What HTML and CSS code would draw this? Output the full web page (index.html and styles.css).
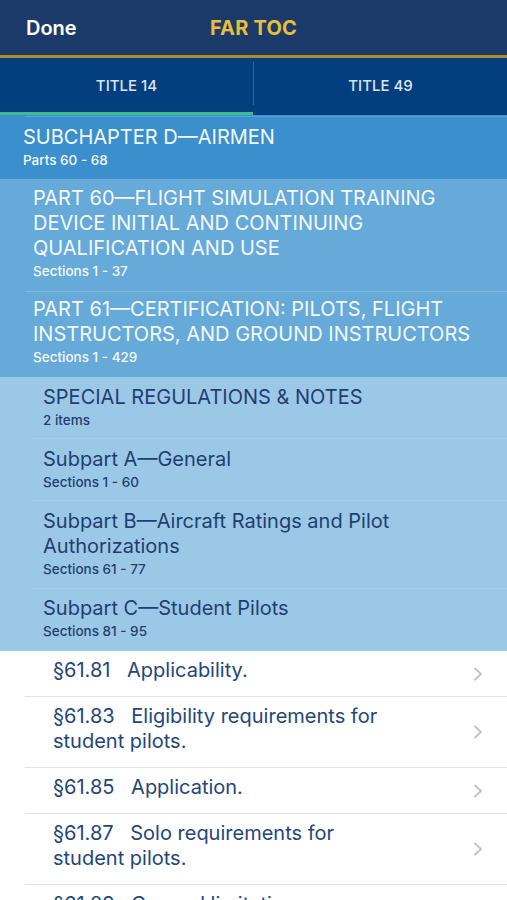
FILE: index.html
```html
<!DOCTYPE html>
<html>
<head>
<meta charset="utf-8">
<link rel="stylesheet" href="styles.css">
</head>
<body>
<header class="nav">
  <span class="done">Done</span>
  <span class="nav-title">FAR TOC</span>
  <span></span>
</header>
<div class="tabs">
  <div class="tab active">TITLE 14</div>
  <span class="divider"></span>
  <div class="tab">TITLE 49</div>
</div>
<div class="toc">
  <div class="row lvl1">
    <div class="head">SUBCHAPTER D—AIRMEN</div>
    <div class="sub">Parts 60 - 68</div>
  </div>
  <div class="row lvl2">
    <div class="head">PART 60—FLIGHT SIMULATION TRAINING DEVICE INITIAL AND CONTINUING QUALIFICATION AND USE</div>
    <div class="sub">Sections 1 - 37</div>
  </div>
  <div class="row lvl2 sep">
    <div class="head">PART 61—CERTIFICATION: PILOTS, FLIGHT INSTRUCTORS, AND GROUND INSTRUCTORS</div>
    <div class="sub">Sections 1 - 429</div>
  </div>
  <div class="row lvl3 first">
    <div class="head">SPECIAL REGULATIONS &amp; NOTES</div>
    <div class="sub">2 items</div>
  </div>
  <div class="row lvl3 sep">
    <div class="head">Subpart A—General</div>
    <div class="sub">Sections 1 - 60</div>
  </div>
  <div class="row lvl3 sep tall">
    <div class="head">Subpart B—Aircraft Ratings and Pilot Authorizations</div>
    <div class="sub">Sections 61 - 77</div>
  </div>
  <div class="row lvl3 sep last">
    <div class="head">Subpart C—Student Pilots</div>
    <div class="sub">Sections 81 - 95</div>
  </div>
</div>
<ul class="sections">
  <li class="sec"><p class="text"><span class="num">§61.81</span> Applicability.</p><span class="chev"><svg width="10" height="14" viewBox="0 0 10 14"><path d="M2 1.5 L8 7 L2 12.5" fill="none" stroke="#c4c4c8" stroke-width="2" stroke-linecap="round" stroke-linejoin="round"/></svg></span></li>
  <li class="sec"><p class="text"><span class="num">§61.83</span> Eligibility requirements for student pilots.</p><span class="chev"><svg width="10" height="14" viewBox="0 0 10 14"><path d="M2 1.5 L8 7 L2 12.5" fill="none" stroke="#c4c4c8" stroke-width="2" stroke-linecap="round" stroke-linejoin="round"/></svg></span></li>
  <li class="sec"><p class="text"><span class="num">§61.85</span> Application.</p><span class="chev"><svg width="10" height="14" viewBox="0 0 10 14"><path d="M2 1.5 L8 7 L2 12.5" fill="none" stroke="#c4c4c8" stroke-width="2" stroke-linecap="round" stroke-linejoin="round"/></svg></span></li>
  <li class="sec"><p class="text"><span class="num">§61.87</span> Solo requirements for student pilots.</p><span class="chev"><svg width="10" height="14" viewBox="0 0 10 14"><path d="M2 1.5 L8 7 L2 12.5" fill="none" stroke="#c4c4c8" stroke-width="2" stroke-linecap="round" stroke-linejoin="round"/></svg></span></li>
  <li class="sec"><p class="text"><span class="num">§61.89</span> General limitations.</p><span class="chev"><svg width="10" height="14" viewBox="0 0 10 14"><path d="M2 1.5 L8 7 L2 12.5" fill="none" stroke="#c4c4c8" stroke-width="2" stroke-linecap="round" stroke-linejoin="round"/></svg></span></li>
</ul>
</body>
</html>
```
FILE: styles.css
```css
* { box-sizing: border-box; }
html, body { margin: 0; padding: 0; }
body {
  width: 507px;
  height: 900px;
  overflow: hidden;
  background: #ffffff;
  font-family: "Inter", "Liberation Sans", sans-serif;
}
.nav {
  height: 58px;
  background: #1b3a6a;
  border-bottom: 3px solid #b08b2c;
  display: grid;
  grid-template-columns: 1fr auto 1fr;
  align-items: center;
  padding: 1px 26px 0 26px;
}
.done {
  color: #ffffff;
  font-size: 20px;
  font-weight: 600;
}
.nav-title {
  color: #e8be3a;
  font-size: 20px;
  font-weight: 700;
  letter-spacing: 0.2px;
}
.tabs {
  height: 57px;
  background: #033f7f;
  display: flex;
  align-items: stretch;
}
.tab {
  flex: 1;
  display: flex;
  align-items: center;
  justify-content: center;
  color: #dbe5f2;
  font-size: 15px;
  font-weight: 500;
  border-bottom: 3px solid transparent;
}
.tab.active { border-bottom-color: #3dbd87; }
.divider {
  width: 1px;
  align-self: center;
  height: 43px;
  margin-top: -6px;
  background: #1e6cb8;
}
.row {
  padding: 7px 20px 11px 0;
}
.head {
  font-size: 20px;
  line-height: 25px;
}
.sub {
  font-size: 13.5px;
  line-height: 18px;
  font-weight: 500;
  margin-top: 1px;
}
.lvl1 {
  background: linear-gradient(#5ba3d9, #5ba3d9) 25px 1px / 100% 1px no-repeat, #3a8fcc;
  padding: 10px 20px 10px 23px;
  color: #f4f8fc;
}
.lvl2 {
  background: #66aad9;
  padding-left: 33px;
  color: #f4f8fc;
}
.lvl2.sep {
  background: linear-gradient(#82bae2, #82bae2) 25px 0 / 100% 1px no-repeat, #66aad9;
  padding-top: 6px;
  padding-bottom: 11px;
}
.lvl3 {
  background: #9bc8e7;
  padding: 9px 20px 9px 43px;
  color: #1f3f6e;
}
.lvl3.sep {
  background: linear-gradient(#a6cfea, #a6cfea) 32px 0 / 100% 1px no-repeat, #9bc8e7;
}
.lvl3.first { padding-top: 8px; }
.lvl3.tall { padding-bottom: 10px; }
.lvl3.last { padding-top: 8px; padding-bottom: 11px; }
.sections {
  list-style: none;
  margin: 0;
  padding: 0;
}
.sec {
  display: flex;
  align-items: center;
  padding: 7px 0 13px 28px;
  border-bottom: 1px solid #e2e2e4;
  margin-left: 25px;
  color: #23467c;
}
.sec .text {
  margin: 0;
  flex: 0 0 334px;
  font-size: 20px;
  line-height: 25px;
}
.sec .num {
  margin-right: 11px;
}
.chev {
  margin-left: auto;
  margin-right: 24px;
  display: flex;
  margin-top: 6px;
}
```
